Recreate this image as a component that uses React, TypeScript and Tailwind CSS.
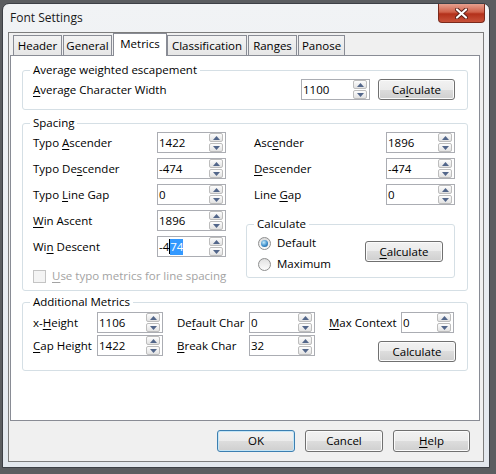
import React from "react";

// Win7-style "Font Settings" dialog, Metrics tab

const Key = ({ text, at }: { text: string; at: number }) => (
  <>
    {text.slice(0, at)}
    <span className="underline decoration-1 underline-offset-[2px]">{text[at]}</span>
    {text.slice(at + 1)}
  </>
);

const Arrow = ({ up }: { up?: boolean }) => (
  <div className="flex h-[9px] w-[14px] items-center justify-center rounded-[2px] border border-[#bdbdbd] bg-[linear-gradient(#fdfdfd,#e2e2e2)]">
    <svg width="7" height="4" viewBox="0 0 7 4">
      <path d={up ? "M0 4L3.5 0L7 4Z" : "M0 0L3.5 4L7 0Z"} fill="#52668a" />
    </svg>
  </div>
);

const Spin = ({
  value,
  className,
  children,
}: {
  value?: string;
  className: string;
  children?: React.ReactNode;
}) => (
  <div className={`flex h-[21px] items-center border border-[#abadb3] bg-white ${className}`}>
    <div className="flex h-full flex-1 items-center pl-[1px]">{children ?? value}</div>
    <div className="mr-[2px] flex flex-col gap-px">
      <Arrow up />
      <Arrow />
    </div>
  </div>
);

const Button = ({
  children,
  className,
  primary,
}: {
  children: React.ReactNode;
  className: string;
  primary?: boolean;
}) => (
  <div
    className={`flex h-[21px] items-center justify-center rounded-[3px] border bg-[linear-gradient(#f2f2f2,#ebebeb_50%,#dddddd_50%,#cfcfcf)] ${
      primary
        ? "border-[#3c7fb1] shadow-[inset_0_0_0_1px_#c4e5f6]"
        : "border-[#707070] shadow-[inset_0_0_0_1px_#fbfbfb]"
    } ${className}`}
  >
    {children}
  </div>
);

const Group = ({
  title,
  className,
  children,
}: {
  title: string;
  className: string;
  children: React.ReactNode;
}) => (
  <fieldset className={`rounded-[3px] border border-[#d5dfe5] ${className}`}>
    <legend className="ml-[7px] px-[3px] leading-[16px]">{title}</legend>
    {children}
  </fieldset>
);

const Row = ({
  label,
  at,
  value,
  labelWidth,
}: {
  label: string;
  at: number;
  value: string;
  labelWidth: string;
}) => (
  <div className="flex h-[21px] items-center">
    <div className={labelWidth}>
      <Key text={label} at={at} />
    </div>
    <Spin value={value} className="w-[69px]" />
  </div>
);

const Radio = ({ checked, label }: { checked?: boolean; label: string }) => (
  <div className="flex h-[16px] items-center gap-[6px]">
    <div className="flex h-[13px] w-[13px] items-center justify-center rounded-full border border-[#8e8f8f] bg-[linear-gradient(#dcdcdc,#fbfbfb)]">
      {checked ? (
        <div className="h-[7px] w-[7px] rounded-full bg-[radial-gradient(circle_at_40%_35%,#c6ecfb,#3d8ecb_55%,#174f82)]" />
      ) : (
        <div className="h-[9px] w-[9px] rounded-full bg-[linear-gradient(#e4e4e4,#fafafa)]" />
      )}
    </div>
    <span>{label}</span>
  </div>
);

const tabs = [
  { name: "Header", w: "w-[49px] mr-[1px]" },
  { name: "General", w: "w-[49px] mr-[1px]" },
  { name: "Metrics", w: "w-[54px]", active: true },
  { name: "Classification", w: "w-[80px] mr-[1px]" },
  { name: "Ranges", w: "w-[49px] mr-[1px]" },
  { name: "Panose", w: "w-[47px]" },
];

const CloseGlyph = () => (
  <svg width="13" height="11" viewBox="0 0 13 11">
    <path d="M2 1.5L11 9.5M11 1.5L2 9.5" stroke="#5a2018" strokeWidth="4" strokeLinecap="round" />
    <path d="M2 1.5L11 9.5M11 1.5L2 9.5" stroke="#ffffff" strokeWidth="2.2" strokeLinecap="round" />
  </svg>
);

const App = () => (
  <div className="h-[474px] w-[496px] overflow-hidden bg-[#5b5d60] pl-[2px] pt-[3px] font-['Open_Sans',sans-serif] text-[11.5px] leading-[16px] text-black">
    <div className="flex h-[465px] w-[488px] flex-col rounded-t-[7px] border border-[#3d4046] bg-[linear-gradient(#f1f3f5,#e3e8ee)] px-[5px] pb-[5px]">
      {/* title bar */}
      <div className="flex h-[28px] justify-between">
        <div className="flex items-center pl-[2px] text-[12px] text-[#1a1a1a]">Font Settings</div>
        <div className="-mr-[1px] flex h-[19px] w-[47px] items-center justify-center rounded-b-[4px] border border-t-0 border-[#7a2a1c] bg-[linear-gradient(#e6a08f,#d0614a_45%,#b3301a_55%,#c8523a)]">
          <CloseGlyph />
        </div>
      </div>

      {/* client area */}
      <div className="flex flex-1 flex-col border border-[#7d7d7d] bg-[#f0f0f0]">
        <div className="flex h-[22px] items-end pl-[4px]">
          {tabs.map((t) =>
            t.active ? (
              <div
                key={t.name}
                className={`relative z-10 -mb-px flex h-[23px] items-start justify-center border border-b-0 border-[#898c95] bg-white pt-[2px] ${t.w}`}
              >
                {t.name}
              </div>
            ) : (
              <div
                key={t.name}
                className={`flex h-[20px] items-center justify-center border border-b-0 border-[#898c95] bg-[linear-gradient(#f3f3f3,#e6e6e6)] ${t.w}`}
              >
                {t.name}
              </div>
            ),
          )}
        </div>

        {/* tab panel */}
        <div className="ml-[1px] h-[366px] w-[470px] border border-[#898c95] bg-white px-[11px] pt-[6px]">
          <Group title="Average weighted escapement" className="h-[48px]">
            <div className="mt-px flex h-[21px] items-center pl-[10px] pr-[12px]">
              <div className="flex-1">
                <Key text="Average Character Width" at={0} />
              </div>
              <Spin value="1100" className="w-[69px]" />
              <Button className="ml-[8px] w-[77px]">
                <Key text="Calculate" at={2} />
              </Button>
            </div>
          </Group>

          <Group title="Spacing" className="mt-[5px] h-[176px]">
            <div className="mt-px flex">
              <div className="flex w-[223px] flex-col gap-[5px] pl-[10px]">
                <Row label="Typo Ascender" at={5} value="1422" labelWidth="w-[124px]" />
                <Row label="Typo Descender" at={7} value="-474" labelWidth="w-[124px]" />
                <Row label="Typo Line Gap" at={5} value="0" labelWidth="w-[124px]" />
                <Row label="Win Ascent" at={0} value="1896" labelWidth="w-[124px]" />
                <div className="flex h-[21px] items-center">
                  <div className="w-[124px]">
                    <Key text="Win Descent" at={2} />
                  </div>
                  <Spin className="w-[69px]">
                    <span>-4</span>
                    <span className="h-[15px] w-px bg-black" />
                    <span className="bg-[#3399ff] text-white">74</span>
                  </Spin>
                </div>
                <div className="mt-[6px] flex h-[16px] items-center gap-[6px] text-[#a3a3a3]">
                  <div className="h-[13px] w-[13px] border border-[#c4c4c4] bg-[#f4f4f4]" />
                  <span>
                    <Key text="Use typo metrics for line spacing" at={0} />
                  </span>
                </div>
              </div>

              <div className="flex w-[209px] flex-col gap-[5px]">
                <div className="pl-[8px]">
                  <Row label="Ascender" at={3} value="1896" labelWidth="w-[132px]" />
                </div>
                <div className="pl-[8px]">
                  <Row label="Descender" at={0} value="-474" labelWidth="w-[132px]" />
                </div>
                <div className="pl-[8px]">
                  <Row label="Line Gap" at={5} value="0" labelWidth="w-[132px]" />
                </div>
                <Group title="Calculate" className="mt-[6px] h-[62px]">
                  <div className="mt-[3px] flex items-start pl-[11px]">
                    <div className="flex flex-1 flex-col gap-[5px]">
                      <Radio checked label="Default" />
                      <Radio label="Maximum" />
                    </div>
                    <Button className="mr-[11px] mt-[6px] w-[78px]">
                      <Key text="Calculate" at={0} />
                    </Button>
                  </div>
                </Group>
              </div>
            </div>
          </Group>

          <Group title="Additional Metrics" className="mt-[3px] h-[77px]">
            <div className="mt-[2px] flex flex-col gap-[2px] pl-[10px] pr-[11px]">
              <div className="flex h-[21px] items-center">
                <div className="w-[64px]">
                  <Key text="x-Height" at={2} />
                </div>
                <Spin value="1106" className="w-[66px]" />
                <div className="ml-[14px] w-[72px]">
                  <Key text="Default Char" at={2} />
                </div>
                <Spin value="0" className="w-[66px]" />
                <div className="ml-[14px] w-[72px]">
                  <Key text="Max Context" at={0} />
                </div>
                <Spin value="0" className="w-[53px]" />
              </div>
              <div className="flex items-start">
                <div className="flex h-[21px] w-[64px] items-center">
                  <Key text="Cap Height" at={0} />
                </div>
                <Spin value="1422" className="w-[66px]" />
                <div className="ml-[14px] flex h-[21px] w-[72px] items-center">
                  <Key text="Break Char" at={0} />
                </div>
                <Spin value="32" className="w-[66px]" />
                <Button className="ml-auto mt-[6px] w-[78px]">Calculate</Button>
              </div>
            </div>
          </Group>
        </div>

        {/* dialog buttons */}
        <div className="mt-[9px] flex justify-end gap-[10px] pr-[13px]">
          <Button primary className="h-[22px] w-[78px]">
            OK
          </Button>
          <Button className="h-[22px] w-[78px]">Cancel</Button>
          <Button className="h-[22px] w-[77px]">
            <Key text="Help" at={0} />
          </Button>
        </div>
      </div>
    </div>
  </div>
);

export default App;
